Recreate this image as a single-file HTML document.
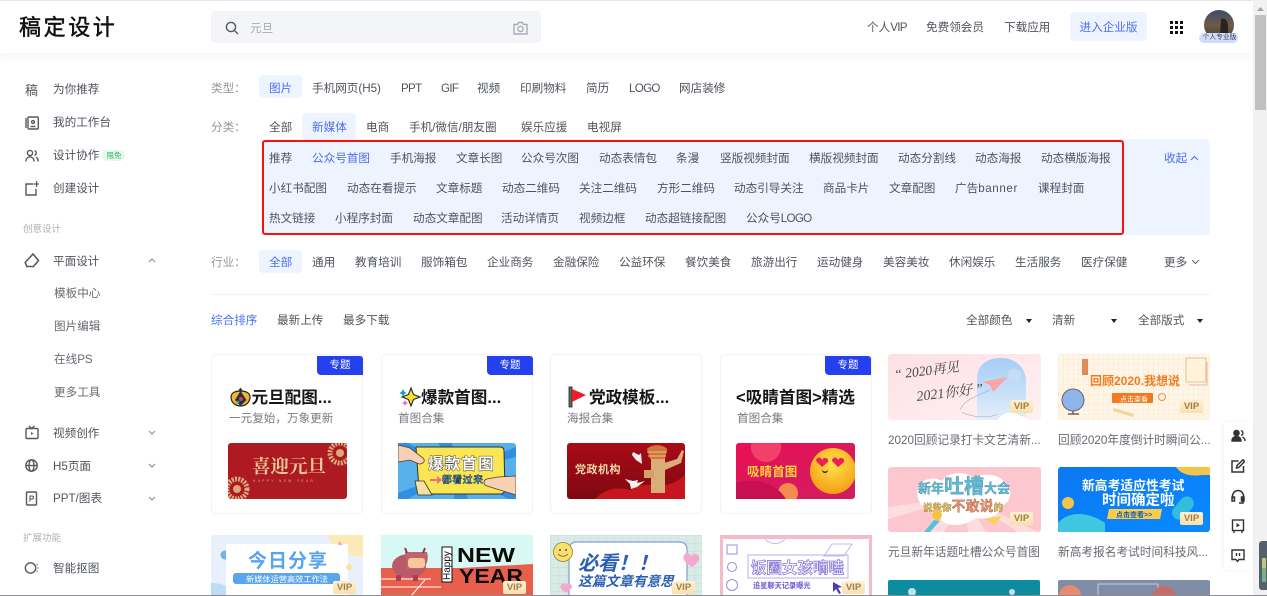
<!DOCTYPE html>
<html lang="zh"><head><meta charset="utf-8"><title>稿定设计</title>
<style>
html,body{margin:0;padding:0;width:1267px;height:596px;overflow:hidden;background:#fff}
body{position:relative;font-family:"Liberation Sans","Noto Sans CJK SC",sans-serif;color:#4f545c;filter:blur(.3px)}
.t{position:absolute;line-height:16px;white-space:nowrap;font-size:11.6px;margin-top:1px}
.b{color:#4a6ef5}
.g{color:#94979e}
.tag{position:absolute;background:#eef4ff;border-radius:4px}
.card{position:absolute;top:354px;width:152px;height:160px;border:1px solid #f1f2f4;border-radius:5px;box-sizing:border-box;background:#fff}
.zt{position:absolute;top:356px;width:46px;height:19px;background:#2440ef;border-radius:0 3px 0 4px;color:#fff;font-size:10.5px;line-height:19px;text-align:center}
.h{position:absolute;top:387px;font-size:16.6px;line-height:22px;font-weight:700;color:#15171a;white-space:nowrap}
.s{position:absolute;top:411px;font-size:11.6px;line-height:16px;color:#777b82;white-space:nowrap}
.ic{position:absolute;fill:none;stroke:#555a62;stroke-width:1.4}
.ar{position:absolute;width:0;height:0;border:3px solid transparent;border-top:4px solid #222;border-bottom:0}
.vip{position:absolute;width:23px;height:13px;background:linear-gradient(#fdf0d2,#f8dfae);border-radius:2px;color:#a17f45;font-size:9.5px;line-height:13px;text-align:center;font-weight:700}
i{font-style:normal;letter-spacing:-.7px}
</style></head><body>

<div style="position:absolute;left:0;top:0;width:1253px;height:53px;background:#fff;border-top:1px solid #e6e6ec;box-sizing:border-box;box-shadow:0 3px 8px rgba(30,40,60,.05)"></div>
<div class="t" style="left:19px;top:13px;line-height:28px;font-size:22px;letter-spacing:2.6px;color:#111;-webkit-text-stroke:.5px #111">稿定设计</div>
<div style="position:absolute;left:211px;top:11px;width:330px;height:32px;background:#f3f5f8;border-radius:4px"></div>
<svg class="ic" style="left:225px;top:21px" width="14" height="14" viewBox="0 0 14 14"><circle cx="6" cy="6" r="4.6"/><path d="M9.6 9.6L13 13"/></svg>
<div class="t" style="left:250px;top:19.500px;color:#a9acb2">元旦</div>
<svg class="ic" style="left:513px;top:21px;stroke:#a9acb2" width="15" height="14" viewBox="0 0 15 14"><path d="M1 3.500h3.400L5.600 1.500h3.800l1.200 2H14v9.500H1z"/><circle cx="7.500" cy="8" r="2.600"/></svg>
<div class="t" style="left:867px;top:19px">个人<i>VIP</i></div>
<div class="t" style="left:926px;top:19px">免费领会员</div>
<div class="t" style="left:1004px;top:19px">下载应用</div>
<div class="tag" style="left:1070px;top:12px;width:77px;height:29px"></div>
<div class="t b" style="left:1079.5px;top:18.500px">进入企业版</div>
<svg style="position:absolute;left:1170px;top:21px" width="13" height="13" fill="#111"><rect x="0" y="0" width="3" height="3"/><rect x="5" y="0" width="3" height="3"/><rect x="10" y="0" width="3" height="3"/><rect x="0" y="5" width="3" height="3"/><rect x="5" y="5" width="3" height="3"/><rect x="10" y="5" width="3" height="3"/><rect x="0" y="10" width="3" height="3"/><rect x="5" y="10" width="3" height="3"/><rect x="10" y="10" width="3" height="3"/></svg>
<svg style="position:absolute;left:1199px;top:9px" width="40" height="34"><defs><linearGradient id="av" x1="0" y1="0" x2="0" y2="1"><stop offset="0" stop-color="#3e4c66"/><stop offset=".5" stop-color="#6d5a48"/><stop offset="1" stop-color="#4a3a30"/></linearGradient></defs><circle cx="20" cy="16" r="15" fill="url(#av)"/><path d="M22 10c4-2 7 2 7 8v8h-8z" fill="#2a2220"/><rect x="0" y="24" width="39" height="10" rx="5" fill="#cfdffb"/></svg>
<div class="t" style="left:1202.500px;top:32px;font-size:6.800px;line-height:10px;color:#3e4a66">个人专业版</div>

<!-- scrollbar -->
<div style="position:absolute;left:1253px;top:0;width:14px;height:596px;background:#f1f1f1"></div>
<div style="position:absolute;left:1255px;top:15px;width:11px;height:95px;background:#c1c1c1"></div>
<svg style="position:absolute;left:1256px;top:6px" width="9" height="6"><path d="M4.500 1L8 5H1z" fill="#a3a3a3"/></svg>

<!-- sidebar -->
<div class="t" style="left:25px;top:81.500px;font-size:13px;color:#555a62">稿</div>
<svg class="ic" style="left:25px;top:116px" width="14" height="14" viewBox="0 0 14 14"><rect x="3" y="1" width="10.300" height="12" rx="1"/><path d="M1 2v10"/><circle cx="8" cy="6" r="1.400"/><path d="M5.500 10.500h5"/></svg>
<svg class="ic" style="left:25px;top:149px" width="14" height="14" viewBox="0 0 14 14"><circle cx="5" cy="4" r="2.600"/><path d="M1 12.500c0-3 1.800-4.600 4-4.600s4 1.600 4 4.600"/><path d="M9.500 1.600a2.600 2.600 0 0 1 0 4.900M11 8.200c1.300.6 2.200 2.200 2.200 4.300"/></svg>
<svg class="ic" style="left:25px;top:181px" width="14" height="15" viewBox="0 0 14 15"><path d="M8 3H1v11h10V8"/><path d="M11.500 0v6M8.500 3h6" stroke-width="1.200"/></svg>
<div class="t" style="left:53px;top:81px">为你推荐</div>
<div class="t" style="left:53px;top:114px">我的工作台</div>
<div class="t" style="left:53px;top:147px">设计协作</div>
<div style="position:absolute;left:102px;top:150px;width:23px;height:11px;background:#e6f7ec;border-radius:6px"></div>
<div class="t" style="left:106.500px;top:149px;font-size:7.500px;line-height:11px;color:#35b567">限免</div>
<div class="t" style="left:53px;top:180px">创建设计</div>
<div class="t" style="left:23px;top:221px;font-size:9.500px;color:#aeb1b6">创意设计</div>
<svg class="ic" style="left:24px;top:253px;stroke-width:1.600" width="16" height="15" viewBox="0 0 16 15"><path d="M9 1l5.500 6.500L9.500 13.500H2.800L1.200 9.500z"/></svg>
<div class="t" style="left:53px;top:252.500px">平面设计</div>
<svg class="ic" style="left:148px;top:258px;stroke:#888;stroke-width:1" width="8" height="5"><path d="M1 4l3-3 3 3"/></svg>
<div class="t" style="left:54px;top:285px;color:#666a70">模板中心</div>
<div class="t" style="left:54px;top:318px;color:#666a70">图片编辑</div>
<div class="t" style="left:54px;top:351px;color:#666a70">在线PS</div>
<div class="t" style="left:54px;top:384px;color:#666a70">更多工具</div>
<svg class="ic" style="left:25px;top:425px" width="14" height="15" viewBox="0 0 14 15"><rect x="1" y="3.500" width="12" height="10" rx="1"/><path d="M4 1l2.500 2.500L9.500 1"/><path d="M6 7l2.500 1.500L6 10z" fill="#555a62" stroke="none"/></svg>
<div class="t" style="left:53px;top:425px">视频创作</div>
<svg class="ic" style="left:148px;top:430px;stroke:#888;stroke-width:1" width="8" height="5"><path d="M1 1l3 3 3-3"/></svg>
<svg class="ic" style="left:25px;top:459px" width="13" height="13" viewBox="0 0 13 13"><circle cx="6.500" cy="6.500" r="5.700"/><ellipse cx="6.500" cy="6.500" rx="2.500" ry="5.700"/><path d="M1 6.500h11"/></svg>
<div class="t" style="left:53px;top:458px">H5页面</div>
<svg class="ic" style="left:148px;top:463px;stroke:#888;stroke-width:1" width="8" height="5"><path d="M1 1l3 3 3-3"/></svg>
<svg class="ic" style="left:25px;top:491px" width="13" height="15" viewBox="0 0 13 15"><rect x="1.500" y="1" width="10" height="13" rx="1"/><path d="M5 10.500V5h2c2 0 2 3 0 3H5" stroke-width="1.100"/></svg>
<div class="t" style="left:53px;top:490px">PPT/图表</div>
<svg class="ic" style="left:148px;top:496px;stroke:#888;stroke-width:1" width="8" height="5"><path d="M1 1l3 3 3-3"/></svg>
<div class="t" style="left:23px;top:530px;font-size:9.500px;color:#aeb1b6">扩展功能</div>
<svg class="ic" style="left:24px;top:561px" width="15" height="14" viewBox="0 0 15 14"><circle cx="6.500" cy="7" r="5.200"/><path d="M13 3.500v1M14 6.500v1M13 9.500v1"/></svg>
<div class="t" style="left:53px;top:560px">智能抠图</div>

<!-- filter -->
<div class="t g" style="left:211px;top:79.500px">类型&#65306;</div>
<div class="tag" style="left:259px;top:75px;width:43px;height:23px"></div>
<div class="t b" style="left:269px;top:79.500px">图片</div>
<div class="t" style="left:312px;top:79.500px">手机网页(H5)</div>
<div class="t" style="left:401px;top:79.500px"><i>PPT</i></div>
<div class="t" style="left:441px;top:79.500px"><i>GIF</i></div>
<div class="t" style="left:477px;top:79.500px">视频</div>
<div class="t" style="left:520px;top:79.500px">印刷物料</div>
<div class="t" style="left:586px;top:79.500px">简历</div>
<div class="t" style="left:629px;top:79.500px"><i>LOGO</i></div>
<div class="t" style="left:679px;top:79.500px">网店装修</div>

<div class="t g" style="left:211px;top:119px">分类&#65306;</div>
<div class="t" style="left:269px;top:119px">全部</div>
<div style="position:absolute;left:302px;top:113px;width:54px;height:30px;background:#eef4ff;border-radius:4px 4px 0 0"></div>
<div class="t b" style="left:312px;top:119px">新媒体</div>
<div class="t" style="left:366px;top:119px">电商</div>
<div class="t" style="left:409px;top:119px">手机/微信/朋友圈</div>
<div class="t" style="left:521px;top:119px">娱乐应援</div>
<div class="t" style="left:587px;top:119px">电视屏</div>

<div style="position:absolute;left:262px;top:139px;width:948px;height:96px;background:#eef4ff;border-radius:4px"></div>
<div style="position:absolute;left:262px;top:140px;width:862px;height:95px;border:2px solid #f5130f;border-radius:3px;box-sizing:border-box"></div>

<div class="t" style="left:269px;top:150px">推荐</div>
<div class="t b" style="left:312px;top:150px">公众号首图</div>
<div class="t" style="left:390px;top:150px">手机海报</div>
<div class="t" style="left:456px;top:150px">文章长图</div>
<div class="t" style="left:521px;top:150px">公众号次图</div>
<div class="t" style="left:599px;top:150px">动态表情包</div>
<div class="t" style="left:676px;top:150px">条漫</div>
<div class="t" style="left:720px;top:150px">竖版视频封面</div>
<div class="t" style="left:809px;top:150px">横版视频封面</div>
<div class="t" style="left:898px;top:150px">动态分割线</div>
<div class="t" style="left:975px;top:150px">动态海报</div>
<div class="t" style="left:1041px;top:150px">动态横版海报</div>
<div class="t b" style="left:1164px;top:149.500px">收起</div>
<svg class="ic" style="left:1190px;top:155px;stroke:#4f72f5;stroke-width:1.100" width="9" height="6"><path d="M1 5l3.500-3.500L8 5"/></svg>

<div class="t" style="left:269px;top:180px">小红书配图</div>
<div class="t" style="left:347px;top:180px">动态在看提示</div>
<div class="t" style="left:436px;top:180px">文章标题</div>
<div class="t" style="left:502px;top:180px">动态二维码</div>
<div class="t" style="left:579px;top:180px">关注二维码</div>
<div class="t" style="left:657px;top:180px">方形二维码</div>
<div class="t" style="left:734px;top:180px">动态引导关注</div>
<div class="t" style="left:823px;top:180px">商品卡片</div>
<div class="t" style="left:889px;top:180px">文章配图</div>
<div class="t" style="left:955px;top:180px">广告<span style="letter-spacing:.6px">banner</span></div>
<div class="t" style="left:1038px;top:180px">课程封面</div>

<div class="t" style="left:269px;top:209.500px">热文链接</div>
<div class="t" style="left:335px;top:209.500px">小程序封面</div>
<div class="t" style="left:413px;top:209.500px">动态文章配图</div>
<div class="t" style="left:501px;top:209.500px">活动详情页</div>
<div class="t" style="left:579px;top:209.500px">视频边框</div>
<div class="t" style="left:645px;top:209.500px">动态超链接配图</div>
<div class="t" style="left:746px;top:209.500px">公众号<i>LOGO</i></div>

<div class="t g" style="left:211px;top:254px">行业&#65306;</div>
<div class="tag" style="left:259px;top:250px;width:43px;height:23px"></div>
<div class="t b" style="left:269px;top:254px">全部</div>
<div class="t" style="left:312px;top:254px">通用</div>
<div class="t" style="left:355px;top:254px">教育培训</div>
<div class="t" style="left:421px;top:254px">服饰箱包</div>
<div class="t" style="left:487px;top:254px">企业商务</div>
<div class="t" style="left:553px;top:254px">金融保险</div>
<div class="t" style="left:619px;top:254px">公益环保</div>
<div class="t" style="left:685px;top:254px">餐饮美食</div>
<div class="t" style="left:751px;top:254px">旅游出行</div>
<div class="t" style="left:817px;top:254px">运动健身</div>
<div class="t" style="left:883px;top:254px">美容美妆</div>
<div class="t" style="left:949px;top:254px">休闲娱乐</div>
<div class="t" style="left:1015px;top:254px">生活服务</div>
<div class="t" style="left:1081px;top:254px">医疗保健</div>
<div class="t" style="left:1164px;top:254px">更多</div>
<svg class="ic" style="left:1191px;top:259px;stroke:#666;stroke-width:1" width="9" height="6"><path d="M1 1l3.500 3.500L8 1"/></svg>

<div style="position:absolute;left:211px;top:294px;width:999px;height:1px;background:#f0f1f3"></div>

<div class="t b" style="left:211px;top:312px">综合排序</div>
<div class="t" style="left:277px;top:312px">最新上传</div>
<div class="t" style="left:343px;top:312px">最多下载</div>
<div class="t" style="left:966px;top:312px">全部颜色</div>
<div class="ar" style="left:1026px;top:319px"></div>
<div class="t" style="left:1052px;top:312px">清新</div>
<div class="ar" style="left:1111px;top:319px"></div>
<div class="t" style="left:1138px;top:312px">全部版式</div>
<div class="ar" style="left:1197px;top:319px"></div>

<!-- collection cards -->
<div class="card" style="left:211px"></div>
<div class="card" style="left:381px"></div>
<div class="card" style="left:550px"></div>
<div class="card" style="left:720px"></div>
<div class="zt" style="left:317px">专题</div>
<div class="zt" style="left:487px">专题</div>
<div class="zt" style="left:825px">专题</div>

<svg style="position:absolute;left:230px;top:386px" width="22" height="22"><path d="M1 11c0-4 4-6 9.500-6S20 7 20 11c0 6-5 9-9.500 9S1 17 1 11z" fill="#f4b62a" stroke="#222" stroke-width="1.200"/><path d="M8 5l2.500-3.500L13 5z" fill="#333"/><path d="M10.500 5l6 9-6 6-5.500-6z" fill="#22304f"/><circle cx="11" cy="13" r="2" fill="#d63a58"/><circle cx="8" cy="16" r="1.400" fill="#21a5a5"/></svg>
<div class="h" style="left:251.500px">元旦配图...</div>
<div class="s" style="left:229px">一元复始&#65292;万象更新</div>
<svg style="position:absolute;left:399px;top:386px" width="22" height="22"><path d="M12 2l2.500 6.500L21 11l-6.500 2.500L12 20l-2.500-6.500L3 11l6.500-2.500z" fill="#f9df2f" stroke="#222" stroke-width="1.100"/><path d="M4 3l1.200 2.500L7.500 7 5.200 8.300 4 11 2.800 8.300.5 7l2.300-1.500z" fill="#14a0b8"/><path d="M6 14l1 2 2 1-2 1-1 2-1-2-2-1 2-1z" fill="#ef6aa0"/></svg>
<div class="h" style="left:421px">爆款首图...</div>
<div class="s" style="left:398px">首图合集</div>
<svg style="position:absolute;left:568px;top:386px" width="22" height="22"><rect x="1" y="1" width="3" height="20" fill="#666" stroke="#222" stroke-width=".8"/><path d="M4 3l14 6-14 7z" fill="#ee1c25"/></svg>
<div class="h" style="left:589px">党政模板...</div>
<div class="s" style="left:567px">海报合集</div>
<div class="h" style="left:736px">&lt;吸睛首图&gt;精选</div>
<div class="s" style="left:737px">首图合集</div>

<!-- collection thumbnails -->
<svg style="position:absolute;left:0;top:0" width="1267" height="596">
<defs>
<linearGradient id="c3" x1="0" y1="0" x2="0" y2="1"><stop offset="0" stop-color="#a90b16"/><stop offset="1" stop-color="#7e0812"/></linearGradient>
<linearGradient id="c4" x1="0" y1="0" x2="1" y2="1"><stop offset="0" stop-color="#e90f55"/><stop offset="1" stop-color="#cf1e60"/></linearGradient>
<radialGradient id="emo" cx=".5" cy=".35" r=".7"><stop offset="0" stop-color="#ffe24a"/><stop offset="1" stop-color="#f59a12"/></radialGradient>
<linearGradient id="pk" x1="0" y1="0" x2="1" y2="1"><stop offset="0" stop-color="#fde0e6"/><stop offset="1" stop-color="#fff1f1"/></linearGradient>
<linearGradient id="arch" x1="0" y1="0" x2="0" y2="1"><stop offset="0" stop-color="#a4cdf6"/><stop offset="1" stop-color="#e4eefb"/></linearGradient>
<linearGradient id="bl" x1="0" y1="0" x2="1" y2="1"><stop offset="0" stop-color="#0b78f2"/><stop offset="1" stop-color="#0a8aff"/></linearGradient>
<pattern id="gr1" width="5" height="5" patternUnits="userSpaceOnUse"><path d="M5 0H0V5" fill="none" stroke="#fbe0bd" stroke-width=".6"/></pattern>
<pattern id="gr2" width="8" height="8" patternUnits="userSpaceOnUse"><path d="M8 0H0V8" fill="none" stroke="#b9d8cf" stroke-width=".7"/></pattern>
</defs>

<svg x="228" y="443" width="119" height="56"><rect width="119" height="56" rx="3" fill="#ae1a22"/>
<circle cx="112" cy="10" r="10" fill="none" stroke="#dba97c" stroke-width="5" stroke-dasharray="2 1.200"/><circle cx="112" cy="10" r="4" fill="#dba97c"/>
<circle cx="9" cy="46" r="10" fill="none" stroke="#dba97c" stroke-width="5" stroke-dasharray="2 1.200"/><circle cx="9" cy="46" r="4" fill="#dba97c"/>
<text x="24" y="30" font-family="Liberation Serif,Noto Serif CJK SC,serif" font-size="18.500" font-weight="700" fill="#ecc897">喜迎元旦</text>
<text x="25" y="39" font-family="Liberation Sans,sans-serif" font-size="3.200" letter-spacing="2.400" fill="#e0b080">HAPPY NEW YEAR</text></svg>

<svg x="398" y="443" width="118" height="56"><rect width="118" height="56" rx="3" fill="#58afea"/>
<path d="M59 28L0 8V0h10zM59 28L40 0h14zM59 28L118 4v10zM59 28L118 46v10h-8zM59 28L70 56H56zM59 28L10 56H0v-6z" fill="#2f8fe0"/>
<path d="M18 4h84c3 0 4 2 4 4l1 38c0 3-2 5-4 5H26c-3 0-5-2-5-5z" fill="#fae552" stroke="#333" stroke-width="1"/>
<path d="M17 38l3 14h14l-8-14z" fill="#f6dfa0" stroke="#333" stroke-width=".8"/>
<path d="M0 2l12 3 13 10c3 3 0 6-4 6l-9-4-12 2z" fill="#f6d1b3" stroke="#5b3a2a" stroke-width=".8"/>
<path d="M118 33l-18 1-11 2c-4 1-4 6 0 7l29 9z" fill="#f6d1b3" stroke="#5b3a2a" stroke-width=".8"/>
<text x="30" y="26" font-family="Liberation Sans,Noto Sans CJK SC,sans-serif" font-size="15.500" font-weight="700" letter-spacing="1.200" fill="#fff" stroke="#444" stroke-width=".9" paint-order="stroke">爆款首图</text>
<path d="M32 36h7v-3l5 4-5 4v-3h-7z" fill="#ed6a8e"/>
<text x="44" y="40" font-family="Liberation Sans,Noto Sans CJK SC,sans-serif" font-size="9.800" font-weight="700" letter-spacing=".6" fill="#4aa6e8" stroke="#222" stroke-width=".4">都看过来</text></svg>

<svg x="567" y="443" width="118" height="56"><rect width="118" height="56" rx="3" fill="url(#c3)"/>
<path d="M28 56c12-12 24-12 36-9 8-8 24-4 34-5 8-1 14-5 20-10v24z" fill="#c7161f"/>
<rect x="84" y="16" width="14" height="34" fill="#d9ad78"/>
<rect x="77" y="27" width="10" height="8" fill="#d3a165"/>
<path d="M97 20l13-4 5-9 2 1-3 12-16 7z" fill="#d9ad78"/>
<path d="M80 6c4-5 16-5 20 0l-2 10H83z" fill="#d0763d"/><path d="M80 9h20M81 13h18" stroke="#edc08c" stroke-width="1"/>
<path d="M66 9l6 3 2-2 1 11-6-4-4-5zM58 36l8 2 5-1-1 3 8-2-8 6-6 2-1-5z" fill="#f5f1ea"/>
<text x="8" y="30" font-family="Liberation Sans,Noto Sans CJK SC,sans-serif" font-size="11" font-weight="700" letter-spacing=".5" fill="#f5d9a8">党政机构</text></svg>

<svg x="736" y="443" width="119" height="56"><rect width="119" height="56" rx="3" fill="url(#c4)"/>
<circle cx="30" cy="4" r="15" fill="#f3406a"/><circle cx="52" cy="50" r="10" fill="#f78a4e"/><path d="M0 40c20-6 40 0 50 16H0z" fill="#c80f50"/>
<circle cx="97" cy="28" r="23" fill="url(#emo)"/>
<path d="M80 18c0-4 5-5 6-1 2-4 7-2 6 2l-6 5zM96 18c0-4 5-5 6-1 2-4 7-2 6 2l-6 5z" fill="#ef1f55"/>
<path d="M86 27c2 2 4 2 6 0-.5 4-5.500 4-6 0z" fill="#4a2310"/>
<text x="11" y="33" font-family="Liberation Sans,Noto Sans CJK SC,sans-serif" font-size="12.500" font-weight="700" letter-spacing=".1" fill="#ffd43c">吸睛首图</text></svg>

<!-- row 2 -->
<svg x="211" y="535" width="152" height="61"><rect width="152" height="61" rx="3" fill="#e8f0fc"/>
<path d="M115 0h37v22c-18-2-30-10-37-22z" fill="#fbe9b6"/>
<circle cx="14" cy="20" r="4.500" fill="#6fb3f2"/><path d="M0 48c12 0 22 5 28 13H0z" fill="#bcdcf8"/>
<rect x="15" y="9" width="122" height="52" rx="2" fill="#fff"/>
<text x="37" y="32" font-family="Liberation Sans,Noto Sans CJK SC,sans-serif" font-size="19" font-weight="700" letter-spacing="1" fill="#55a4ef">今日分享</text>
<rect x="22" y="38" width="107" height="11" rx="3" fill="#59a6ec"/>
<text x="35" y="47" font-family="Liberation Sans,Noto Sans CJK SC,sans-serif" font-size="8.200" fill="#fff">新媒体运营高效工作法</text>
<path d="M128 6l4 4h-5z" fill="#f0a6c6"/><circle cx="138" cy="32" r="3" fill="#fbe39a"/></svg>

<svg x="381" y="535" width="152" height="61"><rect width="152" height="61" fill="#d7f8f5"/>
<path d="M0 33l80 0 72-4v32H0z" fill="#e8604c"/>
<path d="M0 44h50M0 52h60M30 61l14-16" stroke="#fff" stroke-width="1" fill="none"/>
<ellipse cx="28" cy="31" rx="17" ry="12" fill="#b95a68"/>
<path d="M24 17h22c2 7 0 15-6 17H26z" fill="#c26470"/><rect x="27" y="23" width="17" height="10" rx="3" fill="#f6c79a"/>
<path d="M26 18l-2-5M42 18l2-5" stroke="#8a3a48" stroke-width="2"/>
<rect x="15" y="40" width="5" height="6" fill="#a83f52"/><rect x="32" y="40" width="5" height="6" fill="#a83f52"/>
<rect x="61" y="12" width="10" height="35" fill="#fff" stroke="#111" stroke-width="1"/>
<text x="0" y="0" transform="translate(69 45) rotate(-90)" font-family="Liberation Sans,sans-serif" font-size="10" fill="#111">Happy</text>
<text x="76" y="27" font-family="Liberation Sans,sans-serif" font-size="20" font-weight="700" textLength="58" lengthAdjust="spacingAndGlyphs" fill="#0a0a0a">NEW</text>
<text x="78" y="48" font-family="Liberation Sans,sans-serif" font-size="20" font-weight="700" textLength="64" lengthAdjust="spacingAndGlyphs" fill="#0a0a0a">YEAR</text></svg>

<svg x="550" y="535" width="152" height="61"><rect width="152" height="61" fill="#d8ebe6"/><rect width="152" height="61" fill="url(#gr2)"/>
<rect x="19" y="7" width="118" height="60" rx="7" fill="#fff" stroke="#7f9fd4" stroke-width="1.200"/>
<circle cx="13" cy="17" r="9.500" fill="#fde06b" stroke="#8a8a3a" stroke-width=".8"/>
<circle cx="10" cy="15" r="1" fill="#555"/><circle cx="16" cy="15" r="1" fill="#555"/><path d="M8 19c3 3 7 3 10 0" stroke="#555" fill="none" stroke-width=".8"/>
<path d="M142 32c-6-4-10-7-8-12 2-3 6-2 7 1 2-3 7-3 8 1 1 4-3 7-7 10z" fill="#f4a7cf"/>
<path d="M16 58c-4-3-7-5-5-8 1-2 4-2 5 0 1-2 5-2 6 1 0 3-3 5-6 7z" fill="#f4a7cf"/>
<text x="28" y="35" font-family="Liberation Sans,Noto Sans CJK SC,sans-serif" font-size="20" font-weight="700" font-style="italic" fill="#2a5fb3">必看&#65281;&#65281;</text>
<text x="28" y="51" font-family="Liberation Sans,Noto Sans CJK SC,sans-serif" font-size="13.700" font-weight="700" font-style="italic" fill="#2a5fb3">这篇文章有意思</text></svg>

<svg x="720" y="535" width="152" height="61"><rect width="152" height="61" fill="#f4bcc8"/><rect x="3" y="4" width="146" height="57" fill="#fff"/>
<rect x="28" y="20" width="100" height="23" fill="none" stroke="#a89be8" stroke-width=".8"/>
<rect x="7" y="10" width="10" height="9" fill="none" stroke="#9a8ce0"/><circle cx="12" cy="32" r="4.500" fill="none" stroke="#9a8ce0"/><circle cx="12" cy="50" r="5.500" fill="none" stroke="#9a8ce0"/>
<path d="M112 9h20l-8 12h-20z" fill="none" stroke="#b4a9ea" stroke-width=".8"/>
<path d="M45 4c5 6 15 6 20 0" fill="none" stroke="#b4a9ea" stroke-width=".8"/>
<text x="31" y="38" font-family="Liberation Sans,Noto Sans CJK SC,sans-serif" font-size="15.500" font-weight="700" fill="#fff" stroke="#8a78dc" stroke-width=".8">饭圈女孩嘀嗑</text>
<text x="33" y="53" font-family="Liberation Sans,Noto Sans CJK SC,sans-serif" font-size="7.200" font-weight="700" fill="#6b58d4">追星聊天记录曝光</text>
<path d="M113 47l9 5-4 1 3 5-2 1-3-5-3 3z" fill="#4b3fb0"/></svg>

<!-- right column -->
<svg x="888" y="354" width="153" height="66"><rect width="153" height="66" rx="3" fill="url(#pk)"/>
<path d="M89 66V25c0-15 11-21 24-21s25 8 25 24v38z" fill="url(#arch)"/>
<circle cx="126" cy="22" r="7" fill="#c8dbf4"/><path d="M110 66c4-8 16-10 22-4 4 0 6 2 8 4z" fill="#fff"/>
<path d="M94 28l26-5-15 15-3-7z" fill="#f7a5a5"/><path d="M72 56c4-10 16-14 30-20M74 58c10 6 28 6 36 2" fill="none" stroke="#aab" stroke-width=".6"/>
<text x="7" y="25" font-family="Liberation Serif,Noto Serif CJK SC,serif" font-size="13.500" font-style="italic" fill="#4a4a4a" transform="rotate(-7 7 25)">“ 2020再见</text>
<text x="29" y="47" font-family="Liberation Serif,Noto Serif CJK SC,serif" font-size="14" font-style="italic" fill="#4a4a4a" transform="rotate(-7 29 47)">2021你好 ”</text></svg>

<svg x="1058" y="354" width="152" height="66"><rect width="152" height="66" rx="3" fill="#fef6e8"/><rect width="152" height="66" fill="url(#gr1)"/>
<rect x="24" y="5" width="6" height="16" fill="#e08a5a"/>
<path d="M128 4h20v24h-20z" fill="#fff3dc" stroke="#e6aa88" stroke-width=".8"/><path d="M131 31h18V8" fill="none" stroke="#e6aa88" stroke-width=".8"/>
<circle cx="15" cy="46" r="11" fill="#8fb6ea" stroke="#7a5a60"/><path d="M10 60h11M15 57v3" stroke="#7a5a60" stroke-width="1.500"/>
<text x="32" y="31" font-family="Liberation Sans,Noto Sans CJK SC,sans-serif" font-size="12" font-weight="700" fill="#f07d20">回顾2020.我想说</text>
<rect x="54" y="39" width="41" height="10" rx="1" fill="#f27b1f"/>
<text x="62" y="47.500" font-family="Liberation Sans,Noto Sans CJK SC,sans-serif" font-size="7" fill="#fff">点击查看</text>
<circle cx="104" cy="43" r="3.500" fill="none" stroke="#e8905a"/>
<path d="M56 54l20 6-1 3-20-6z" fill="#f3d49a"/></svg>

<svg x="888" y="467" width="153" height="65"><rect width="153" height="65" rx="3" fill="#fdc7d0"/>
<path d="M76 30L40 65H56zM76 30L80 65h18zM76 30L130 65h20zM76 30L0 40v12z" fill="#fedde0"/>
<path d="M30 22c0-8 14-14 24-8 6-10 24-10 32-3 8-6 30-4 32 8 8 6 4 18-6 20 0 10-12 14-24 12-14 10-34 10-38-4-12 0-24-14-20-25z" fill="#fff"/>
<text x="30" y="26" font-family="Liberation Sans,Noto Sans CJK SC,sans-serif" font-size="13" font-weight="700" fill="#5dbad2" stroke="#3f7f99" stroke-width=".3">新年<tspan font-size="20">吐槽</tspan>大会</text>
<text x="35" y="44" font-family="Liberation Sans,Noto Sans CJK SC,sans-serif" font-size="9.500" font-weight="700" fill="#f3c744" stroke="#7f5f40" stroke-width=".3">说些你<tspan font-size="14" fill="#f28a6a">不敢说</tspan>的</text>
<circle cx="49" cy="48" r="5" fill="#f7c33c"/><path d="M46 53l6 1-10 11h-6z" fill="#55c3d6"/><path d="M96 52l18-3-8 10-3-4z" fill="#f8d35a"/></svg>

<svg x="1058" y="467" width="152" height="65"><rect width="152" height="65" rx="3" fill="url(#bl)"/>
<path d="M118 0c4 6 12 10 26 8h8V0z" fill="#f3c64a"/><circle cx="10" cy="36" r="6" fill="#f3c64a"/><path d="M0 56c10-12 30-12 47 0v9H0z" fill="#3fc7e0"/>
<rect x="118" y="28" width="14" height="26" rx="7" fill="#35bcdc" transform="rotate(40 125 41)"/>
<text x="24" y="23" font-family="Liberation Sans,Noto Sans CJK SC,sans-serif" font-size="12.800" font-weight="700" fill="#fff">新高考适应性考试</text>
<text x="44" y="38" font-family="Liberation Sans,Noto Sans CJK SC,sans-serif" font-size="14.500" font-weight="700" fill="#fff">时间确定啦</text>
<path d="M51 42h53l-2 10H49z" fill="#fbcc4a"/>
<text x="58" y="50" font-family="Liberation Sans,Noto Sans CJK SC,sans-serif" font-size="7" font-weight="700" fill="#0b5fb8">点击查看&gt;&gt;</text></svg>

<svg x="888" y="580" width="152" height="16"><rect width="152" height="16" rx="2" fill="#0d8ca0"/><circle cx="24" cy="12" r="4" fill="#bfe4e8"/><circle cx="124" cy="12" r="3" fill="#bfe4e8"/></svg>
<svg x="1058" y="580" width="152" height="16"><rect width="152" height="16" rx="2" fill="#7f8ea6"/><circle cx="12" cy="16" r="11" fill="#e78a70"/><rect x="40" y="4" width="60" height="12" fill="none" stroke="#dde" stroke-width=".8"/><circle cx="106" cy="18" r="12" fill="#c86a68"/></svg>
</svg>

<div class="vip" style="left:333px;top:581px">VIP</div>
<div class="vip" style="left:503px;top:581px">VIP</div>
<div class="vip" style="left:672px;top:581px">VIP</div>
<div class="vip" style="left:842px;top:581px">VIP</div>
<div class="vip" style="left:1010px;top:400px">VIP</div>
<div class="vip" style="left:1180px;top:400px">VIP</div>
<div class="vip" style="left:1010px;top:512px">VIP</div>
<div class="vip" style="left:1180px;top:512px">VIP</div>

<div class="t" style="left:888px;top:432px;color:#666a70;font-size:11.700px">2020回顾记录打卡文艺清新...</div>
<div class="t" style="left:1058px;top:432px;color:#666a70;font-size:11.700px">回顾2020年度倒计时瞬间公...</div>
<div class="t" style="left:888px;top:544px;color:#666a70;font-size:11.700px">元旦新年话题吐槽公众号首图</div>
<div class="t" style="left:1058px;top:544px;color:#666a70;font-size:11.700px">新高考报名考试时间科技风...</div>

<!-- floating panel -->
<div style="position:absolute;left:1224px;top:422px;width:29px;height:148px;background:#fff;box-shadow:-1px 0 5px rgba(0,0,0,.06);border-radius:3px 0 0 3px"></div>
<svg class="ic" style="left:1231px;top:429px;stroke:#333" width="15" height="14" viewBox="0 0 15 14"><circle cx="5.500" cy="4" r="2.600" fill="#333"/><path d="M1 12c0-3 2-4.500 4.500-4.500S10 9 10 12z" fill="#333"/><path d="M10 1.500a2.600 2.600 0 0 1 0 5M11.500 8c1.500.8 2.500 2 2.500 4"/></svg>
<svg class="ic" style="left:1231px;top:459px;stroke:#333;stroke-width:1.500" width="14" height="14" viewBox="0 0 14 14"><path d="M12.500 7v6H1V2h6.500"/><path d="M5.500 9l.5-2.500L12 .8l1.700 1.700-6 6z"/></svg>
<svg class="ic" style="left:1231px;top:489px;stroke:#333;stroke-width:1.500" width="14" height="15" viewBox="0 0 14 15"><path d="M1.500 10V7a5.500 5.500 0 0 1 11 0v3"/><rect x="1" y="8" width="2.500" height="4" fill="none"/><rect x="10.500" y="8" width="2.500" height="4" fill="#333"/><path d="M12 12v2H8"/></svg>
<svg class="ic" style="left:1231px;top:519px;stroke:#333;stroke-width:1.400" width="14" height="15" viewBox="0 0 14 15"><rect x="1.500" y="1" width="11" height="10.500"/><path d="M5.500 4l3.500 2.200-3.500 2.200z" fill="#333" stroke="none"/><path d="M3 11.500V14M11 11.500V14"/></svg>
<svg class="ic" style="left:1231px;top:549px;stroke:#333;stroke-width:1.400" width="14" height="14" viewBox="0 0 14 14"><path d="M1 1h12v9.500H8l-1.500 2-1.500-2H1z"/><path d="M5.500 4v3M8.500 4v3"/></svg>

<!-- meter widget -->
<div style="position:absolute;left:1259px;top:541px;width:8px;height:49px;background:#56606a;border-radius:3px 0 0 3px"></div>
<div style="position:absolute;left:1262px;top:558px;width:4px;height:10px;background:#c3c478"></div>
<div style="position:absolute;left:1262px;top:568px;width:4px;height:14px;background:#6fb58c"></div>
<div style="position:absolute;left:0;top:595px;width:1267px;height:1px;background:#8a8c90"></div>
</body></html>
